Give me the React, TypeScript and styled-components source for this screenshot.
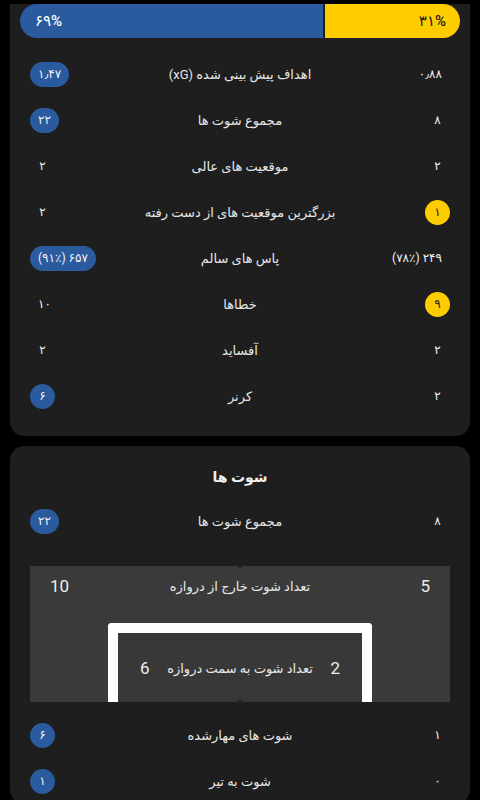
import { createGlobalStyle, css } from 'styled-components';
import styled from 'styled-components';

const GlobalStyle = createGlobalStyle`
    html, body {
        margin: 0;
        padding: 0;
        background: #000;
    }
    body {
        font-family: Roboto, "DejaVu Sans", sans-serif;
        color: #e8e8e8;
        -webkit-font-smoothing: antialiased;
    }
`;

const BLUE = '#2a5b9e';
const YELLOW = '#ffcc00';

type Side = 'home' | 'away' | null;

interface StatRow {
    label: string;
    home: string;
    away: string;
    win: Side;
}

const generalStats: StatRow[] = [
    { label: 'اهداف پیش بینی شده (xG)', home: '۰٫۸۸', away: '۱٫۴۷', win: 'away' },
    { label: 'مجموع شوت ها', home: '۸', away: '۲۲', win: 'away' },
    { label: 'موقعیت های عالی', home: '۲', away: '۲', win: null },
    { label: 'بزرگترین موقعیت های از دست رفته', home: '۱', away: '۲', win: 'home' },
    { label: 'پاس های سالم', home: '۲۴۹ (۷۸٪)', away: '۶۵۷ (۹۱٪)', win: 'away' },
    { label: 'خطاها', home: '۹', away: '۱۰', win: 'home' },
    { label: 'آفساید', home: '۲', away: '۲', win: null },
    { label: 'کرنر', home: '۲', away: '۶', win: 'away' },
];

const shotStatsBottom: StatRow[] = [
    { label: 'شوت های مهارشده', home: '۱', away: '۶', win: 'away' },
    { label: 'شوت به تیر', home: '۰', away: '۱', win: 'away' },
];

const TopStrip = styled.div`
    height: 4px;
    background: #000;
`;

const Page = styled.div`
    padding: 0 10px;
    display: flex;
    flex-direction: column;
    gap: 10px;
`;

const Card = styled.section<{ $cutTop?: boolean }>`
    background: #1e1e1e;
    border-radius: ${({ $cutTop }) => ($cutTop ? '0 0 14px 14px' : '14px')};
    padding: ${({ $cutTop }) => ($cutTop ? '0 20px 17px' : '20px 20px 0')};
`;

const PossessionBar = styled.div`
    display: flex;
    gap: 2px;
    height: 34px;
    margin: 0 -10px;
    border-radius: 17px;
    overflow: hidden;
`;

const PossessionPart = styled.div<{ $team: 'home' | 'away'; $share: number }>`
    box-sizing: border-box;
    display: flex;
    align-items: center;
    font-size: 15px;
    font-weight: 500;
    ${({ $team, $share }) =>
        $team === 'away'
            ? css`
                  flex: 0 0 calc(${$share}% - 1px);
                  background: ${BLUE};
                  color: #fff;
                  justify-content: flex-start;
                  padding-left: 15px;
              `
            : css`
                  flex: 1;
                  background: ${YELLOW};
                  color: #1c1c1c;
                  justify-content: flex-end;
                  padding-right: 14px;
              `}
`;

const Rows = styled.div<{ $top?: number }>`
    padding-top: ${({ $top }) => $top ?? 0}px;
    display: flex;
    flex-direction: column;
`;

const Row = styled.div`
    direction: rtl;
    display: grid;
    grid-template-columns: 1fr auto 1fr;
    align-items: center;
    height: 46px;
`;

const Label = styled.div`
    font-size: 13px;
    color: #e6e6e6;
    text-align: center;
    white-space: nowrap;
`;

const Value = styled.span<{ $side: 'home' | 'away'; $win: boolean }>`
    justify-self: ${({ $side }) => ($side === 'home' ? 'start' : 'end')};
    direction: rtl;
    min-width: 25px;
    height: 25px;
    box-sizing: border-box;
    padding: 0 8px;
    border-radius: 13px;
    display: inline-flex;
    align-items: center;
    justify-content: center;
    font-size: 12px;
    white-space: nowrap;
    color: ${({ $win, $side }) => ($win && $side === 'home' ? '#1c1c1c' : '#f2f2f2')};
    background: ${({ $win, $side }) =>
        $win ? ($side === 'home' ? YELLOW : BLUE) : 'transparent'};
`;

const Title = styled.h3`
    margin: 0;
    height: 22px;
    line-height: 22px;
    text-align: center;
    font-size: 14px;
    font-weight: 700;
    color: #f0f0f0;
`;

const Pitch = styled.div`
    position: relative;
    margin: 22px 0 10px;
    height: 136px;
    background: #3a3a3a;
    display: flex;
    flex-direction: column;
    align-items: center;
    padding-top: 10px;
    box-sizing: border-box;

    &::before,
    &::after {
        content: '';
        position: absolute;
        left: 50%;
        transform: translateX(-50%);
        border-left: 3px solid transparent;
        border-right: 3px solid transparent;
    }
    &::before {
        top: 0;
        border-top: 3px solid #262626;
    }
    &::after {
        bottom: 0;
        border-bottom: 3px solid #262626;
    }
`;

const ZoneLine = styled.div<{ $width: string; $inset?: number }>`
    direction: rtl;
    width: ${({ $width }) => $width};
    padding: 0 ${({ $inset }) => $inset ?? 0}px;
    box-sizing: border-box;
    display: grid;
    grid-template-columns: 1fr auto 1fr;
    align-items: center;
    height: 20px;
`;

const ZoneLabel = styled.div`
    font-size: 13px;
    color: #e8e8e8;
    white-space: nowrap;
`;

const ZoneNumber = styled.span<{ $side: 'home' | 'away' }>`
    justify-self: ${({ $side }) => ($side === 'home' ? 'start' : 'end')};
    font-family: Roboto, sans-serif;
    font-size: 17px;
    color: #eeeeee;
`;

const Goal = styled.div`
    margin-top: 27px;
    width: 264px;
    flex: 1;
    box-sizing: border-box;
    border: 10px solid #fff;
    border-bottom: none;
    border-radius: 4px 4px 0 0;
    background: #383838;
    display: flex;
    flex-direction: column;
    align-items: center;
    padding-top: 25px;
`;

function StatLine({ row }: { row: StatRow }) {
    return (
        <Row>
            <Value $side="home" $win={row.win === 'home'}>
                {row.home}
            </Value>
            <Label>{row.label}</Label>
            <Value $side="away" $win={row.win === 'away'}>
                {row.away}
            </Value>
        </Row>
    );
}

export default function App() {
    return (
        <>
            <GlobalStyle />
            <TopStrip />
            <Page>
                <Card $cutTop>
                    <PossessionBar>
                        <PossessionPart $team="away" $share={69}>
                            ۶۹%
                        </PossessionPart>
                        <PossessionPart $team="home" $share={31}>
                            ۳۱%
                        </PossessionPart>
                    </PossessionBar>
                    <Rows $top={13}>
                        {generalStats.map((row) => (
                            <StatLine key={row.label} row={row} />
                        ))}
                    </Rows>
                </Card>

                <Card>
                    <Title>شوت ها</Title>
                    <Rows $top={10}>
                        <StatLine
                            row={{ label: 'مجموع شوت ها', home: '۸', away: '۲۲', win: 'away' }}
                        />
                    </Rows>

                    <Pitch>
                        <ZoneLine $width="100%" $inset={20}>
                            <ZoneNumber $side="home">5</ZoneNumber>
                            <ZoneLabel>تعداد شوت خارج از دروازه</ZoneLabel>
                            <ZoneNumber $side="away">10</ZoneNumber>
                        </ZoneLine>
                        <Goal>
                            <ZoneLine $width="200px">
                                <ZoneNumber $side="home">2</ZoneNumber>
                                <ZoneLabel>تعداد شوت به سمت دروازه</ZoneLabel>
                                <ZoneNumber $side="away">6</ZoneNumber>
                            </ZoneLine>
                        </Goal>
                    </Pitch>

                    <Rows>
                        {shotStatsBottom.map((row) => (
                            <StatLine key={row.label} row={row} />
                        ))}
                    </Rows>
                </Card>
            </Page>
        </>
    );
}
